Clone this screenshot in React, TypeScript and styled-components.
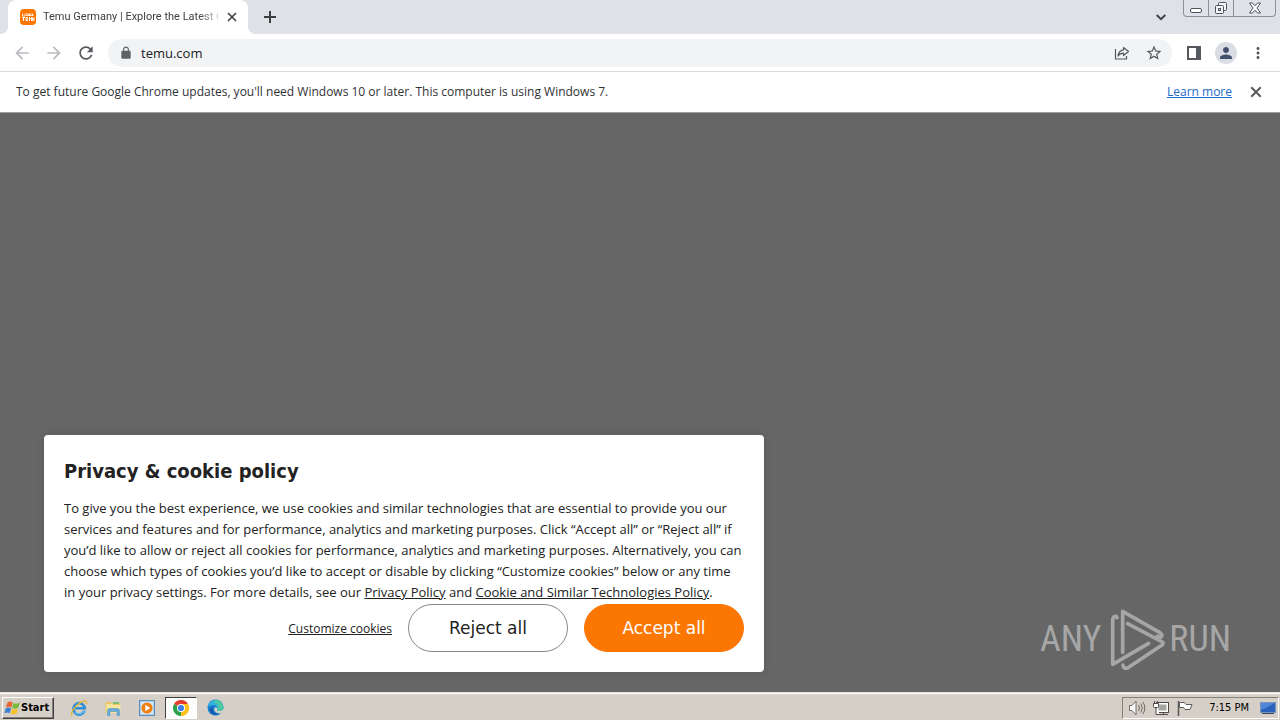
import React from "react";
import styled, { createGlobalStyle } from "styled-components";

const uiFont = `"Open Sans", "Noto Sans", sans-serif`;
const shellFont = `"DejaVu Sans Condensed", "DejaVu Sans", sans-serif`;

const GlobalStyle = createGlobalStyle`
  *, *::before, *::after { box-sizing: border-box; }
  body { margin: 0; font-family: ${uiFont}; background: #666; }
  button { margin: 0; padding: 0; border: 0; background: none; font: inherit; color: inherit; cursor: pointer; }
  svg { display: block; flex: none; }
`;

const Screen = styled.div`
  display: flex;
  flex-direction: column;
  min-height: 100vh;
`;

/* ---------- tab strip ---------- */

const TabStrip = styled.header`
  display: flex;
  align-items: flex-start;
  height: 34px;
  padding: 0 4px 0 8px;
  background: #dee1e6;
`;

const Tab = styled.div`
  position: relative;
  display: flex;
  align-items: center;
  gap: 7px;
  width: 240px;
  height: 34px;
  padding: 0 9px 0 12px;
  background: #fff;
  border-radius: 8px 8px 0 0;

  &::before,
  &::after {
    content: "";
    position: absolute;
    bottom: 0;
    width: 8px;
    height: 8px;
  }
  &::before {
    left: -8px;
    background: radial-gradient(circle at 0 0, transparent 8px, #fff 8px);
  }
  &::after {
    right: -8px;
    background: radial-gradient(circle at 100% 0, transparent 8px, #fff 8px);
  }
`;

const TabTitle = styled.span`
  flex: 1;
  min-width: 0;
  overflow: hidden;
  white-space: nowrap;
  font: 11px/16px Roboto, sans-serif;
  color: #3c4043;
  mask-image: linear-gradient(to right, #000 156px, transparent 180px);
`;

const TabButton = styled.button<{ $width: number }>`
  display: flex;
  align-items: center;
  justify-content: center;
  width: ${(p) => p.$width}px;
  height: 34px;
  color: #3c4043;
`;

const TabClose = styled(TabButton)`
  height: 16px;
`;

const StripSpace = styled.div`
  flex: 1;
`;

const WindowControls = styled.div`
  display: flex;
  height: 17px;
  margin-left: 6px;
  border: 1px solid #8d9097;
  border-top: 0;
  border-radius: 0 0 4px 4px;
  background: #dfe2e8;
`;

const WindowButton = styled.button<{ $width: number }>`
  display: flex;
  align-items: center;
  justify-content: center;
  width: ${(p) => p.$width}px;
  color: #4f535b;

  & + & {
    border-left: 1px solid #8d9097;
  }
`;

/* ---------- toolbar ---------- */

const Toolbar = styled.nav`
  display: flex;
  align-items: center;
  height: 38px;
  padding: 0 6px;
  background: #fff;
  border-bottom: 1px solid #dadce0;
`;

const ToolButton = styled.button<{ $dim?: boolean }>`
  display: flex;
  align-items: center;
  justify-content: center;
  width: 32px;
  height: 28px;
  color: ${(p) => (p.$dim ? "#b9bbbe" : "#55585c")};
`;

const AddressBox = styled.div`
  display: flex;
  flex: 1;
  align-items: center;
  height: 28px;
  margin: 0 6px;
  padding: 0 2px 0 11px;
  border-radius: 14px;
  background: #f1f3f4;
  color: #5f6368;
`;

const AddressInput = styled.input`
  flex: 1;
  min-width: 0;
  margin: 0 0 0 8px;
  padding: 0;
  border: 0;
  outline: 0;
  background: none;
  font: 13px/20px ${uiFont};
  color: #202124;
`;

const Avatar = styled.span`
  display: flex;
  align-items: center;
  justify-content: center;
  width: 22px;
  height: 22px;
  border-radius: 50%;
  background: #dadde3;
  color: #44516e;
`;

/* ---------- info bar ---------- */

const InfoBar = styled.aside`
  display: flex;
  align-items: center;
  height: 41px;
  padding: 0 8px 0 16px;
  background: #fff;
  border-bottom: 1px solid #a0a0a0;
  font-size: 12px;
  line-height: 16px;
  color: #303236;
`;

const InfoText = styled.span`
  flex: 1;
`;

const InfoLink = styled.a`
  margin-right: 8px;
  color: #1a68c8;
`;

/* ---------- page ---------- */

const Page = styled.main`
  display: flex;
  flex: 1;
  align-items: flex-end;
  justify-content: space-between;
  padding: 20px 49px 20px 44px;
  background: #666;
`;

const Dialog = styled.section`
  width: 720px;
  padding: 20px;
  border-radius: 4px;
  background: #fff;
  box-shadow: 0 0 8px rgba(0, 0, 0, 0.12);
  color: #222;
`;

const DialogTitle = styled.h1`
  margin: 0;
  font: 700 20px/32px ${shellFont};
`;

const DialogText = styled.p`
  margin: 11px 0 1px;
  font-size: 13px;
  line-height: 21px;

  a {
    color: inherit;
  }
`;

const Actions = styled.div`
  display: flex;
  align-items: center;
  justify-content: flex-end;
  gap: 16px;
`;

const TextButton = styled.button`
  font-size: 12px;
  text-decoration: underline;
`;

const PillButton = styled.button<{ $primary?: boolean }>`
  width: 160px;
  height: 48px;
  border: 1px solid ${(p) => (p.$primary ? "#fb7701" : "#888")};
  border-radius: 24px;
  background: ${(p) => (p.$primary ? "#fb7701" : "#fff")};
  font: 17px/24px "DejaVu Sans", sans-serif;
  color: ${(p) => (p.$primary ? "#fff" : "#222")};
`;

const Watermark = styled.div`
  display: flex;
  align-items: center;
  height: 66px;
  font: 36px/66px "Liberation Sans Narrow", "Roboto Condensed", Roboto, sans-serif;
  color: #a6a6a6;

  span:first-child {
    margin-right: 6px;
  }
`;

/* ---------- taskbar ---------- */

const Taskbar = styled.footer`
  display: flex;
  align-items: center;
  height: 28px;
  padding: 3px 1px 1px 2px;
  border-top: 1px solid #e4e1da;
  box-shadow: inset 0 1px 0 #fff;
  background: #d5cfc7;
`;

const StartButton = styled.button`
  display: flex;
  align-items: center;
  height: 22px;
  margin-right: 9px;
  padding: 0 4px 0 1px;
  border: 1px solid;
  border-color: #fff #404040 #404040 #fff;
  box-shadow: inset -1px -1px 0 #858178;
  font: 700 11px/16px ${shellFont};
  color: #000;
`;

const TaskButton = styled.button<{ $active?: boolean }>`
  display: flex;
  align-items: center;
  justify-content: center;
  width: 32px;
  height: 22px;
  margin-right: 2px;
  border: 1px solid;
  border-color: ${(p) => (p.$active ? "#404040 #fff #fff #404040" : "transparent")};
  background: ${(p) => (p.$active ? "#fdfdfc" : "transparent")};
`;

const Tray = styled.div`
  display: flex;
  align-items: center;
  gap: 6px;
  height: 22px;
  margin-left: auto;
  padding: 0 2px 0 5px;
  border: 1px solid;
  border-color: #858178 #fff #fff #858178;
`;

const Clock = styled.time`
  margin: 0 5px 0 9px;
  font: 11px/16px ${shellFont};
  color: #000;
`;

/* ---------- drawings ---------- */

const Glyph = ({ d, size }: { d: string; size: number }) => (
  <svg width={size} height={size} viewBox="0 0 24 24" fill="currentColor" aria-hidden="true">
    <path d={d} />
  </svg>
);

const paths = {
  back: "M20 11H7.83l5.59-5.59L12 4l-8 8 8 8 1.41-1.41L7.83 13H20v-2z",
  forward: "M12 4l-1.41 1.41L16.17 11H4v2h12.17l-5.58 5.59L12 20l8-8z",
  reload:
    "M17.65 6.35C16.2 4.9 14.21 4 12 4c-4.42 0-7.99 3.58-7.99 8s3.57 8 7.99 8c3.73 0 6.84-2.55 7.73-6h-2.08c-.82 2.33-3.04 4-5.65 4-3.31 0-6-2.69-6-6s2.69-6 6-6c1.66 0 3.14.69 4.22 1.78L13 11h7V4l-2.35 2.35z",
  lock: "M18 8h-1V6c0-2.76-2.24-5-5-5S7 3.24 7 6v2H6c-1.1 0-2 .9-2 2v10c0 1.1.9 2 2 2h12c1.1 0 2-.9 2-2V10c0-1.1-.9-2-2-2zM9 6c0-1.66 1.34-3 3-3s3 1.34 3 3v2H9V6z",
  star: "M22 9.24l-7.19-.62L12 2 9.19 8.63 2 9.24l5.46 4.73L5.82 21 12 17.27 18.18 21l-1.63-7.03L22 9.24zM12 15.4l-3.76 2.27 1-4.28-3.32-2.88 4.38-.38L12 6.1l1.71 4.04 4.38.38-3.32 2.88 1 4.28L12 15.4z",
  person:
    "M12 12c2.21 0 4-1.79 4-4s-1.79-4-4-4-4 1.79-4 4 1.79 4 4 4zm0 2c-2.67 0-8 1.34-8 4v2h16v-2c0-2.66-5.33-4-8-4z",
  dots: "M12 8c1.1 0 2-.9 2-2s-.9-2-2-2-2 .9-2 2 .9 2 2 2zm0 2c-1.1 0-2 .9-2 2s.9 2 2 2 2-.9 2-2-.9-2-2-2zm0 6c-1.1 0-2 .9-2 2s.9 2 2 2 2-.9 2-2-.9-2-2-2z",
};

const Cross = ({ size }: { size: number }) => (
  <svg width={size} height={size} viewBox="0 0 10 10" stroke="currentColor" strokeWidth="1.6" aria-hidden="true">
    <path d="M1 1l8 8M9 1l-8 8" />
  </svg>
);

const TemuIcon = () => (
  <svg width="16" height="16" viewBox="0 0 16 16" aria-hidden="true">
    <rect width="16" height="16" rx="4" fill="#fb7701" />
    <g stroke="#fff" strokeWidth="1" fill="none">
      <path d="M2.500 4.500v2.500h2.500v-2.500M6 5h2.500v1.500H6M9.500 7V4.500l1 1 1-1M12.500 4.500v2.500M9 6.500h4.500" opacity="0.8" />
      <path d="M2 8.500h3M3.500 8.500V12M8 8.500h-2V11.500h2M6 10h2M9.500 12V8.500l1 1.500 1-1.500V12M12.500 8.500v3h1.500v-3" />
    </g>
  </svg>
);

const ShareIcon = () => (
  <svg width="16" height="16" viewBox="0 0 16 16" fill="none" stroke="currentColor" strokeWidth="1.2" aria-hidden="true">
    <path d="M1.500 4v10h11v-3" />
    <path d="M9.500 2.500l5 4-5 4V8.200C7 8.200 5.300 9 4 11c.4-3.500 2.300-5.700 5.500-6.200z" strokeLinejoin="round" />
  </svg>
);

const PanelIcon = () => (
  <svg width="14" height="14" viewBox="0 0 14 14" aria-hidden="true">
    <path d="M1 1h12v12H1z" fill="none" stroke="currentColor" strokeWidth="2" />
    <path d="M9 1h4v12H9z" fill="currentColor" />
  </svg>
);

const MinimizeIcon = () => (
  <svg width="14" height="14" viewBox="0 0 14 14" fill="#fff" stroke="currentColor" aria-hidden="true">
    <rect x="1.500" y="7.500" width="11" height="4" rx="1.500" />
  </svg>
);

const RestoreIcon = () => (
  <svg width="14" height="14" viewBox="0 0 14 14" fill="#f4f5f7" stroke="currentColor" aria-hidden="true">
    <rect x="4.500" y="1.500" width="8" height="8" rx="1" />
    <rect x="1.500" y="4.500" width="8" height="8" rx="1" />
    <rect x="4.500" y="7.500" width="2" height="2" />
  </svg>
);

const WindowCloseIcon = () => (
  <svg width="14" height="12" viewBox="0 0 14 12" fill="#fff" stroke="currentColor" strokeLinejoin="round" aria-hidden="true">
    <path d="M1.500 1h3L7 3.800 9.500 1h3L9 6l3.500 5h-3L7 8.200 4.500 11h-3L5 6z" />
  </svg>
);

const PlayMark = () => (
  <svg width="62" height="72" viewBox="0 0 186 216" fill="none" stroke="currentColor" strokeWidth="11" strokeLinecap="round" strokeLinejoin="round" aria-hidden="true">
    <path d="M30 44Q28 37 20 42Q17 45 17 54V184L125 121" />
    <path d="M47 148V25L159 89Q169 96 161 103L150 100" />
    <path d="M62 62L166 117Q172 121 164 127L63 194Q48 199 48 186" />
  </svg>
);

const WindowsFlag = () => (
  <svg width="17" height="16" viewBox="0 0 17 16" aria-hidden="true">
    <path d="M3.500 2.500C5.500 1 7 1.500 8.600 2.500L7.300 7.500C5.500 6.500 4 6.500 2 7.500z" fill="#e8642c" />
    <path d="M9.400 3C11.500 4 13.500 4 15.800 2.600L14.300 7.700C12 9 10 8.800 8.100 7.900z" fill="#7db93c" />
    <path d="M1.800 8.300C4 7.200 5.500 7.500 7.100 8.400L5.800 13.300C4 12.300 2.500 12.300.4 13.300z" fill="#3e7fd0" />
    <path d="M7.900 8.800C10 9.700 12 9.700 14.100 8.600L12.700 13.400C10.500 14.700 8.500 14.400 6.600 13.700z" fill="#f6c02c" />
  </svg>
);

const ExplorerIcon = () => (
  <svg width="18" height="18" viewBox="0 0 18 18" fill="none" aria-hidden="true">
    <path d="M14.500 11.800A5.700 5.700 0 1 1 14.800 9.200H5" stroke="#2f8fd2" strokeWidth="2.600" />
    <path d="M14.300 11.500A5.500 5.500 0 0 1 5 13" stroke="#6cc3f0" strokeWidth="1.200" />
    <path d="M2.200 16.500C-.5 13 8 3.500 14 2c2.600-.6 3 1 2 3" stroke="#e3b53a" strokeWidth="1.300" />
  </svg>
);

const FolderIcon = () => (
  <svg width="18" height="18" viewBox="0 0 18 18" aria-hidden="true">
    <path d="M1.500 3h5.500l1 1.500h8V14H1.500z" fill="#e9c766" />
    <path d="M2.500 5h5.500l1 1h7.500v8H2.500z" fill="#f8e6a0" />
    <path d="M9 3h6v2H9z" fill="#7dbb72" />
    <path d="M3.500 16.500V11.500Q3.500 9.500 5.500 9.500h8q2 0 2 2v5h-2.500v-4h-7v4z" fill="#69aedb" stroke="#4589ba" strokeWidth="0.500" />
  </svg>
);

const MediaIcon = () => (
  <svg width="18" height="18" viewBox="0 0 18 18" aria-hidden="true">
    <rect x="1.500" y="1.500" width="15" height="15" fill="#a9cdea" stroke="#5e8fba" />
    <rect x="3" y="3" width="12" height="12" fill="#d8e8f4" />
    <circle cx="9" cy="9" r="5.600" fill="#f07f13" />
    <path d="M7.300 5.800l5 3.200-5 3.200z" fill="#fff" />
  </svg>
);

const ChromeIcon = () => (
  <svg width="16" height="16" viewBox="0 0 16 16" aria-hidden="true">
    <path d="M8 8L1.070 4A8 8 0 0 1 14.930 4z" fill="#e33b2e" />
    <path d="M8 8L14.930 4A8 8 0 0 1 8 16z" fill="#fcc31e" />
    <path d="M8 8L8 16A8 8 0 0 1 1.070 4z" fill="#2da04e" />
    <path d="M8 4h6.930A8 8 0 0 1 8 16l3.460-6z" fill="#fcc31e" />
    <circle cx="8" cy="8" r="4" fill="#fff" />
    <circle cx="8" cy="8" r="3.100" fill="#3f7fe8" />
  </svg>
);

const EdgeIcon = () => (
  <svg width="17" height="17" viewBox="0 0 17 17" aria-hidden="true">
    <circle cx="8.500" cy="8.500" r="8" fill="#1b7fd0" />
    <path d="M.6 8A8 8 0 0 1 16.500 8.200C16.500 11 14.200 12 12 12c-2 0-2.500-.8-1.900-1.600C11.300 8.500 9.800 6 6.800 6 3.500 6 1.300 7.200.6 8z" fill="#2fb4dc" />
    <path d="M9 .6A8 8 0 0 1 16.500 8.200C16.500 11 14.200 12 12 12c-2 0-2.500-.8-1.900-1.600C12 8 11 4 6 3z" fill="#5bcf8b" opacity="0.700" />
    <path d="M6 7.500C4.500 11 7 15.500 12.500 14.800 10 17 5.500 16.500 3.500 13 2 10 3.500 8 6 7.500z" fill="#1659a8" />
    <path d="M10.100 10.400C9.500 11.200 10 12 12 12c1.800 0 3.500-.5 5-2v3.500L14 14.500c-4.500 0-7-2.300-6.700-4.600C7.800 7.800 9.500 7.800 10.300 9z" fill="#d5cfc7" />
  </svg>
);

const SpeakerIcon = () => (
  <svg width="18" height="18" viewBox="0 0 18 18" fill="none" stroke="#6e6b66" aria-hidden="true">
    <path d="M1.500 6.500h2.500l4-4.500v14l-4-4.500H1.500z" fill="#fff" />
    <path d="M10.500 6q1.800 3 0 6M12.800 4.500q3 4.500 0 9M15 3q3.600 6 0 12" strokeWidth="1" />
  </svg>
);

const NetworkIcon = () => (
  <svg width="18" height="18" viewBox="0 0 18 18" stroke="#4d4b48" aria-hidden="true">
    <rect x="4.500" y="3.500" width="12" height="10" fill="#fff" />
    <rect x="6.500" y="5.500" width="8" height="6" fill="#a5a4a1" stroke="none" />
    <path d="M7 15.500h9M11.500 14v1" fill="none" />
    <path d="M1.500 4.500h5v3q0 1-1 1h-3q-1 0-1-1zM2.500 2v2M5.500 2v2M4 8.500v7h4" fill="#fff" />
  </svg>
);

const FlagIcon = () => (
  <svg width="18" height="18" viewBox="0 0 18 18" fill="#fff" stroke="#5b5955" aria-hidden="true">
    <path d="M2.500 2v15" strokeWidth="1.500" />
    <path d="M3.500 3.500h5l1.500 2h6l-2 5h-5l-1.500-2h-4z" />
  </svg>
);

const DesktopIcon = () => (
  <svg width="16" height="14" viewBox="0 0 16 14" aria-hidden="true">
    <rect x="0.500" y="1.500" width="15" height="10" fill="#2a62be" stroke="#7a93b8" />
    <path d="M1 2h14L6 7 1 9z" fill="#4f86d8" />
    <path d="M2 12.500h12" stroke="#38465c" />
  </svg>
);

export default function App() {
  return (
    <Screen>
      <GlobalStyle />
      <TabStrip>
        <Tab>
          <TemuIcon />
          <TabTitle>Temu Germany | Explore the Latest Clothing</TabTitle>
          <TabClose $width={14} aria-label="Close tab">
            <Cross size={10} />
          </TabClose>
        </Tab>
        <TabButton $width={44} aria-label="New tab">
          <svg width="12" height="12" viewBox="0 0 12 12" stroke="currentColor" strokeWidth="2" aria-hidden="true">
            <path d="M6 0v12M0 6h12" />
          </svg>
        </TabButton>
        <StripSpace />
        <TabButton $width={32} aria-label="Search tabs">
          <svg width="10" height="10" viewBox="0 0 10 10" fill="none" stroke="currentColor" strokeWidth="1.800" aria-hidden="true">
            <path d="M.7 3L5 7.200 9.300 3" />
          </svg>
        </TabButton>
        <WindowControls>
          <WindowButton $width={24} aria-label="Minimize"><MinimizeIcon /></WindowButton>
          <WindowButton $width={25} aria-label="Restore"><RestoreIcon /></WindowButton>
          <WindowButton $width={42} aria-label="Close window"><WindowCloseIcon /></WindowButton>
        </WindowControls>
      </TabStrip>

      <Toolbar>
        <ToolButton $dim aria-label="Back"><Glyph d={paths.back} size={20} /></ToolButton>
        <ToolButton $dim aria-label="Forward"><Glyph d={paths.forward} size={20} /></ToolButton>
        <ToolButton aria-label="Reload"><Glyph d={paths.reload} size={20} /></ToolButton>
        <AddressBox>
          <Glyph d={paths.lock} size={14} />
          <AddressInput aria-label="Address" defaultValue="temu.com" />
          <ToolButton aria-label="Share"><ShareIcon /></ToolButton>
          <ToolButton aria-label="Bookmark"><Glyph d={paths.star} size={18} /></ToolButton>
        </AddressBox>
        <ToolButton aria-label="Side panel"><PanelIcon /></ToolButton>
        <ToolButton aria-label="Profile">
          <Avatar><Glyph d={paths.person} size={18} /></Avatar>
        </ToolButton>
        <ToolButton aria-label="Menu"><Glyph d={paths.dots} size={18} /></ToolButton>
      </Toolbar>

      <InfoBar>
        <InfoText>
          To get future Google Chrome updates, you'll need Windows 10 or later. This computer is using Windows 7.
        </InfoText>
        <InfoLink href="#learn">Learn more</InfoLink>
        <ToolButton aria-label="Dismiss"><Cross size={12} /></ToolButton>
      </InfoBar>

      <Page>
        <Dialog role="dialog" aria-labelledby="policy-title">
          <DialogTitle id="policy-title">Privacy &amp; cookie policy</DialogTitle>
          <DialogText>
            To give you the best experience, we use cookies and similar technologies that are essential to provide you our
            services and features and for performance, analytics and marketing purposes. Click “Accept all” or “Reject all” if
            you’d like to allow or reject all cookies for performance, analytics and marketing purposes. Alternatively, you can
            choose which types of cookies you’d like to accept or disable by clicking “Customize cookies” below or any time
            in your privacy settings. For more details, see our <a href="#privacy">Privacy Policy</a> and{" "}
            <a href="#cookies">Cookie and Similar Technologies Policy</a>.
          </DialogText>
          <Actions>
            <TextButton>Customize cookies</TextButton>
            <PillButton>Reject all</PillButton>
            <PillButton $primary>Accept all</PillButton>
          </Actions>
        </Dialog>
        <Watermark>
          <span>ANY</span>
          <PlayMark />
          <span>RUN</span>
        </Watermark>
      </Page>

      <Taskbar>
        <StartButton>
          <WindowsFlag />
          Start
        </StartButton>
        <TaskButton aria-label="Internet Explorer"><ExplorerIcon /></TaskButton>
        <TaskButton aria-label="Windows Explorer"><FolderIcon /></TaskButton>
        <TaskButton aria-label="Media Player"><MediaIcon /></TaskButton>
        <TaskButton $active aria-label="Chrome"><ChromeIcon /></TaskButton>
        <TaskButton aria-label="Edge"><EdgeIcon /></TaskButton>
        <Tray>
          <SpeakerIcon />
          <NetworkIcon />
          <FlagIcon />
          <Clock>7:15 PM</Clock>
          <DesktopIcon />
        </Tray>
      </Taskbar>
    </Screen>
  );
}
